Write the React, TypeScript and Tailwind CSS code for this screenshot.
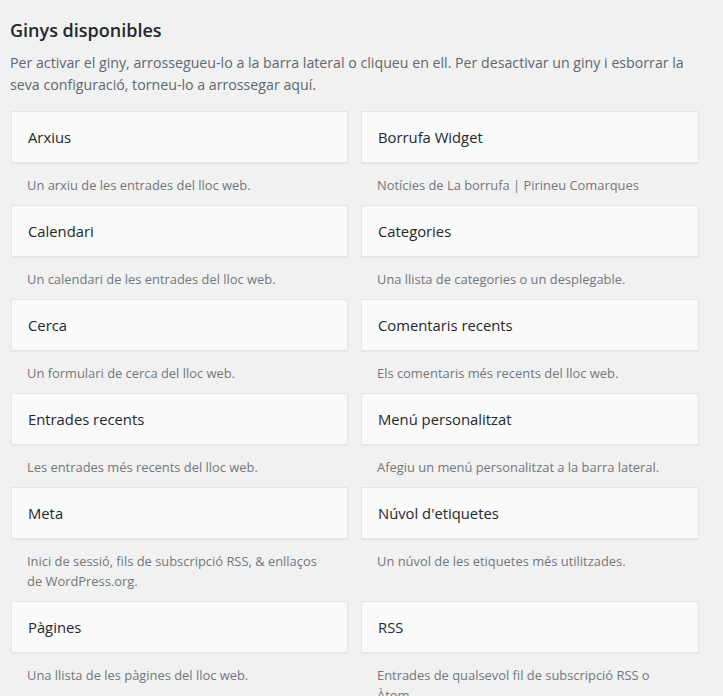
import React from "react";

const widgets: [string, string][] = [
  ["Arxius", "Un arxiu de les entrades del lloc web."],
  ["Borrufa Widget", "Notícies de La borrufa | Pirineu Comarques"],
  ["Calendari", "Un calendari de les entrades del lloc web."],
  ["Categories", "Una llista de categories o un desplegable."],
  ["Cerca", "Un formulari de cerca del lloc web."],
  ["Comentaris recents", "Els comentaris més recents del lloc web."],
  ["Entrades recents", "Les entrades més recents del lloc web."],
  ["Menú personalitzat", "Afegiu un menú personalitzat a la barra lateral."],
  ["Meta", "Inici de sessió, fils de subscripció RSS, & enllaços de WordPress.org."],
  ["Núvol d'etiquetes", "Un núvol de les etiquetes més utilitzades."],
  ["Pàgines", "Una llista de les pàgines del lloc web."],
  ["RSS", "Entrades de qualsevol fil de subscripció RSS o Àtom."],
];

export default function App() {
  return (
    <div className="min-h-[696px] bg-[#f1f1f1] font-['Open_Sans',sans-serif] pl-[10px] pt-[18px] overflow-hidden h-[696px]">
      <h2 className="text-[18px] leading-[24px] font-semibold text-[#23282d] m-0">Ginys disponibles</h2>
      <p className="mt-[9.5px] w-[700px] text-[14.2px] leading-[22px] text-[#60676e]">
        Per activar el giny, arrossegueu-lo a la barra lateral o cliqueu en ell. Per desactivar un giny i esborrar la seva configuració, torneu-lo a arrossegar aquí.
      </p>
      <div className="mt-[15.5px] ml-[1px] grid grid-cols-[337px_338px] gap-x-[13px]">
        {widgets.map(([title, desc]) => (
          <div key={title}>
            <div className="h-[52px] flex items-center pl-[16px] bg-[#fafafa] border border-[#e5e5e5] shadow-[0_1px_1px_rgba(0,0,0,0.04)] text-[14.8px] leading-none text-[#23282d]">
              {title}
            </div>
            <p className="pt-[12px] pb-[10px] pl-[16px] pr-[16px] text-[12.9px] leading-[20px] text-[#72777c]">{desc}</p>
          </div>
        ))}
      </div>
    </div>
  );
}
